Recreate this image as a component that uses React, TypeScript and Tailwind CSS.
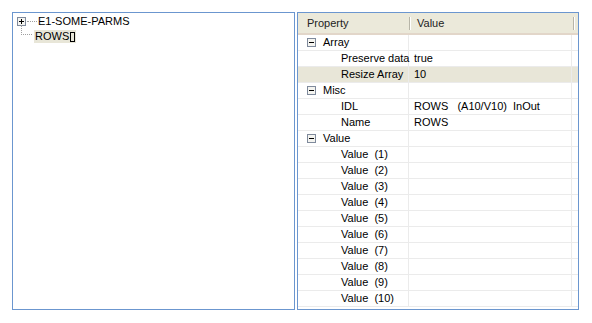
import React from "react";

const font = { fontFamily: '"Liberation Sans", Arial, sans-serif' };

function Box({ plus }: { plus?: boolean }) {
  return (
    <svg width="9" height="9" viewBox="0 0 9 9" className="shrink-0">
      <rect x="0.5" y="0.5" width="8" height="8" fill="#f4f4f0" stroke="#7f8a9c" />
      <line x1="2" y1="4.5" x2="7" y2="4.5" stroke="#000" />
      {plus && <line x1="4.5" y1="2" x2="4.5" y2="7" stroke="#000" />}
    </svg>
  );
}

type Row = { kind: "cat" | "prop"; name: string; value?: string; sel?: boolean };

const rows: Row[] = [
  { kind: "cat", name: "Array" },
  { kind: "prop", name: "Preserve data", value: "true" },
  { kind: "prop", name: "Resize Array", value: "10", sel: true },
  { kind: "cat", name: "Misc" },
  { kind: "prop", name: "IDL", value: "ROWS\u00a0\u00a0\u00a0(A10/V10)\u00a0\u00a0InOut" },
  { kind: "prop", name: "Name", value: "ROWS" },
  { kind: "cat", name: "Value" },
  ...Array.from({ length: 10 }, (_, i) => ({
    kind: "prop" as const,
    name: `Value\u00a0\u00a0(${i + 1})`,
    value: "",
  })),
];

export default function App() {
  return (
    <div className="w-[592px] h-[323px] bg-white pt-[12px] pl-[12px] flex gap-[2px] text-[11px] text-black" style={font}>
      {/* Tree */}
      <div className="w-[283px] h-[298px] border border-[#6b96cf] bg-white relative">
        <div className="flex items-center h-[14px] mt-[1px] ml-[4px]">
          <Box plus />
          <div className="w-[10px] border-t border-dotted border-[#a0a0a0] mx-[1px]" />
          <span className="leading-[14px]">E1-SOME-PARMS</span>
        </div>
        <div className="flex items-start h-[14px] mt-[2px] ml-[8px]">
          <div className="w-[11px] h-[10px] border-l border-b border-dotted border-[#a0a0a0] -mt-[5px]" />
          <span className="ml-[2px] bg-[#e8e6d8] leading-[13px] px-[1px] flex items-center h-[13px]">
            ROWS
            <span className="inline-block w-[5px] h-[10px] border border-black ml-[1px]" />
          </span>
        </div>
      </div>
      {/* Property grid */}
      <div className="w-[282px] h-[298px] border border-[#6b96cf] bg-white flex flex-col">
        <div className="h-[22px] bg-[#ebe9da] flex items-center border-b-2 border-[#e2d6c9] shrink-0">
          <div className="w-[111px] pl-[9px] text-[#222] flex items-center h-full">Property</div>
          <div className="w-[2px] h-[13px] border-l border-[#b7b5a8] border-r border-r-white" />
          <div className="w-[162px] pl-[6px] text-[#222] flex items-center h-full">Value</div>
          <div className="w-[2px] h-[13px] border-l border-[#b7b5a8] border-r border-r-white" />
        </div>
        <div className="flex flex-col">
          {rows.map((r, i) => (
            <div
              key={i}
              className={`h-[16px] flex border-b border-[#ebebeb] ${r.sel ? "bg-[#e8e6d8]" : ""}`}
            >
              <div className="w-[111px] flex items-center border-r border-[#ebebeb]">
                {r.kind === "cat" ? (
                  <>
                    <span className="ml-[9px]"><Box /></span>
                    <span className="ml-[7px] leading-[15px]">{r.name}</span>
                  </>
                ) : (
                  <span className="ml-[43px] leading-[15px] whitespace-nowrap">{r.name}</span>
                )}
              </div>
              <div className="w-[163px] flex items-center border-r border-[#ebebeb] pl-[5px] whitespace-nowrap leading-[15px]">
                {r.value}
              </div>
            </div>
          ))}
        </div>
      </div>
    </div>
  );
}
